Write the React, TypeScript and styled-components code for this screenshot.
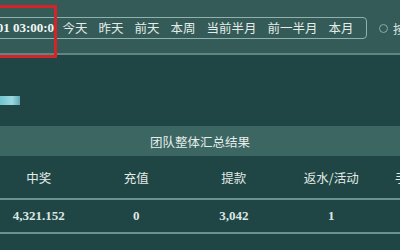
import styled, { createGlobalStyle } from "styled-components";

const GlobalStyle = createGlobalStyle`
  html, body {
    margin: 0;
    padding: 0;
    background: #1f4644;
  }
  #root {
    width: 400px;
    height: 250px;
    overflow: hidden;
  }
`;

const Page = styled.div`
  position: relative;
  width: 400px;
  height: 250px;
  overflow: hidden;
  background: #1f4644;
  font-family: "Noto Sans CJK SC", "Noto Sans", sans-serif;
  color: #dfe9e6;
`;

const FilterBar = styled.div`
  height: 55px;
  padding-top: 17px;
  box-sizing: border-box;
  background: #345b57;
  border-bottom: 2px solid #5e8783;
  display: flex;
  align-items: flex-start;
  gap: 12px;
`;

const RangeBox = styled.div`
  display: flex;
  align-items: center;
  height: 22px;
  box-sizing: border-box;
  margin-left: -6px;
  padding-right: 7px;
  border: 1.5px solid #8fb2ad;
  border-radius: 4px;
`;

const DateField = styled.div`
  width: 60px;
  height: 100%;
  overflow: hidden;
  display: flex;
  align-items: center;
  border-right: 1px solid #6f9692;
  margin-right: 1px;
`;

const DateText = styled.span`
  margin-left: -46px;
  white-space: nowrap;
  font-family: "Liberation Serif", serif;
  font-weight: bold;
  font-size: 13px;
  color: #f2f6f5;
`;

const QuickButton = styled.span`
  padding: 0 5.5px;
  font-size: 12.5px;
  line-height: 20px;
  color: #e3ece9;
  white-space: nowrap;
`;

const RadioOption = styled.div`
  display: flex;
  align-items: center;
  gap: 5px;
  height: 22px;
  font-size: 12.5px;
  color: #d4e0dd;
  white-space: nowrap;
`;

const RadioDot = styled.span`
  width: 7px;
  height: 7px;
  border: 1.5px solid #8ba8a4;
  border-radius: 50%;
`;

const Annotation = styled.div`
  position: absolute;
  left: -10px;
  top: 5px;
  width: 61px;
  height: 47px;
  border: 3.5px solid #d42428;
`;

const Spacer = styled.div`
  height: 71px;
  display: flex;
  align-items: center;
  padding-top: 20px;
  box-sizing: border-box;
`;

const Tag = styled.div`
  width: 20px;
  height: 9px;
  background: linear-gradient(90deg, #6fc5cf 0%, #9ad9df 60%, #5ea9b2 100%);
  filter: blur(0.6px);
`;

const SummaryTitle = styled.div`
  height: 30px;
  background: #3b6662;
  display: flex;
  align-items: center;
  justify-content: center;
  font-size: 12.5px;
  color: #e6eeec;
`;

const Row = styled.div<{ $head?: boolean }>`
  display: grid;
  grid-template-columns: repeat(5, 97.5px);
  margin-left: -10px;
  height: ${(p) => (p.$head ? "42px" : "32px")};
  align-items: center;
  border-bottom: 2px solid #6a928e;
`;

const HeadCell = styled.div`
  text-align: center;
  font-size: 12.5px;
  color: #e2ebe8;
  white-space: nowrap;
`;

const ValueCell = styled.div`
  text-align: center;
  font-family: "Liberation Serif", serif;
  font-weight: bold;
  font-size: 13px;
  color: #dce6e3;
  white-space: nowrap;
`;

const quick = ["今天", "昨天", "前天", "本周", "当前半月", "前一半月", "本月"];
const heads = ["中奖", "充值", "提款", "返水/活动", "手续费/佣金"];
const values = ["4,321.152", "0", "3,042", "1", "0"];

export default function App() {
  return (
    <Page>
      <GlobalStyle />
      <FilterBar>
        <RangeBox>
          <DateField>
            <DateText>2023-01-01 03:00:00</DateText>
          </DateField>
          {quick.map((q) => (
            <QuickButton key={q}>{q}</QuickButton>
          ))}
        </RangeBox>
        <RadioOption>
          <RadioDot />
          按日期
        </RadioOption>
      </FilterBar>
      <Annotation />
      <Spacer>
        <Tag />
      </Spacer>
      <SummaryTitle>团队整体汇总结果</SummaryTitle>
      <Row $head>
        {heads.map((h) => (
          <HeadCell key={h}>{h}</HeadCell>
        ))}
      </Row>
      <Row>
        {values.map((v, i) => (
          <ValueCell key={i}>{v}</ValueCell>
        ))}
      </Row>
    </Page>
  );
}
